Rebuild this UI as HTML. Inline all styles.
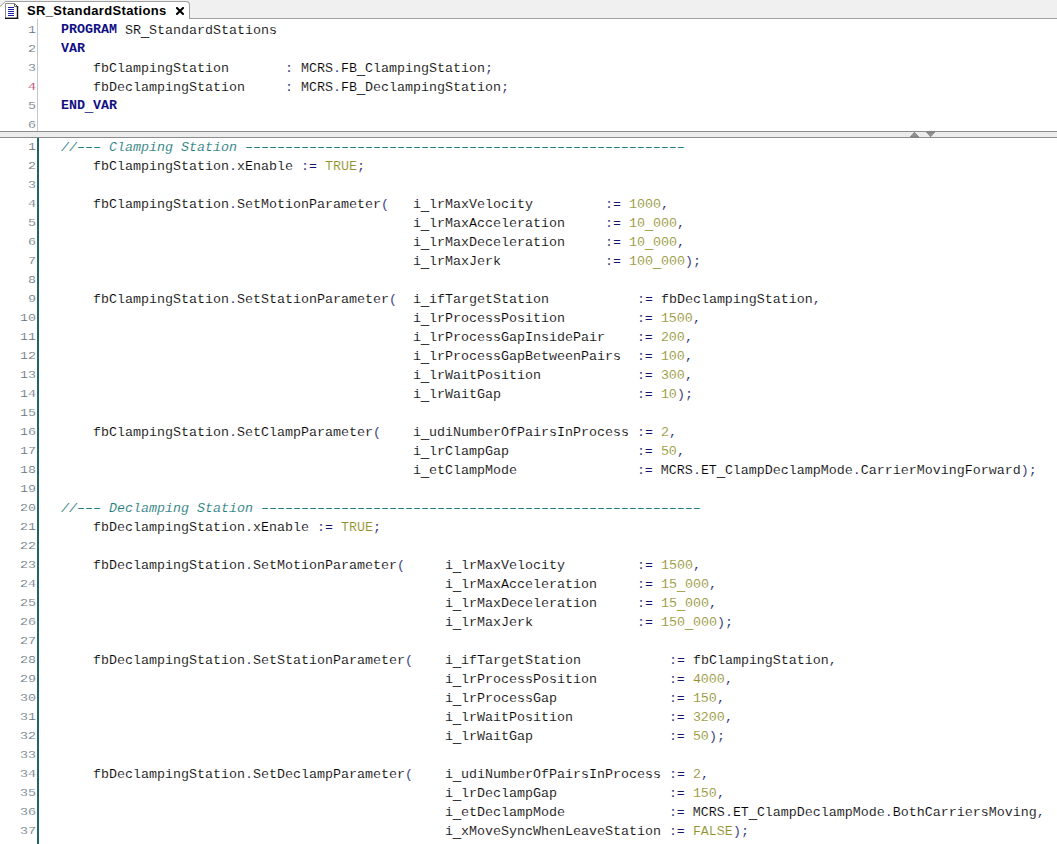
<!DOCTYPE html>
<html><head><meta charset="utf-8"><title>SR_StandardStations</title>
<style>
html,body{margin:0;padding:0;}
body{width:1057px;height:844px;overflow:hidden;background:#fff;position:relative;font-family:"Liberation Sans",sans-serif;}
#tabs{position:absolute;left:0;top:0;width:1057px;height:18px;background:#f0f0f0;border-bottom:1px solid #a0a0a0;}
#tab{position:absolute;left:0;top:1px;width:189px;height:18px;background:#fff;border-top:1px solid #a0a0a0;border-right:1px solid #a0a0a0;border-top-right-radius:4px;box-sizing:content-box;}
#ico{position:absolute;left:5px;top:1px;}
#slant{position:absolute;left:0;top:0;}
#ttl{position:absolute;left:27px;top:1px;font-weight:bold;font-size:13px;line-height:16px;color:#000;white-space:pre;letter-spacing:0.35px;}
#cls{position:absolute;left:176px;top:5px;}
.pane{position:absolute;left:0;width:1057px;background:#fff;overflow:hidden;}
#top{top:19px;height:112px;}
#top .ln{top:2px;}
#top .cd b{position:relative;top:-1px;}
#bot{top:138px;height:706px;}
#split{position:absolute;left:0;top:131px;width:1057px;height:5px;background:#ececec;border-top:1px solid #8c8c8c;border-bottom:1px solid #8c8c8c;}
#arr{position:absolute;left:909px;top:-1px;}
.gut{position:absolute;top:0;bottom:0;}
#top .gut{left:37px;width:1px;background:#c4c4cc;}
#bot .gut{left:37px;width:2px;background:#206464;}
.ln{position:relative;height:19px;white-space:pre;}
.no{position:absolute;left:0;top:-1px;width:36px;text-align:right;font-family:"Liberation Mono",monospace;font-size:13.333px;line-height:19px;color:#63737e;-webkit-text-stroke:0.2px #fff;transform:scaleY(.88);transform-origin:0 13px;}
.no em{font-style:normal;}
.no em.r{color:#b03050;}
.cd{position:absolute;left:61px;top:0;transform:scaleY(.9);transform-origin:0 13px;font-family:"Liberation Mono",monospace;font-size:13.333px;line-height:19px;color:#000;-webkit-text-stroke:0.14px #fff;}
.cd b{color:#101084;font-weight:bold;-webkit-text-stroke:0;}
.cd i{color:#1f7c7c;font-style:italic;-webkit-text-stroke:0.1px #fff;}
.cd a{position:relative;top:2px;-webkit-text-stroke:0.35px currentColor;}
.cd u{color:#90902c;text-decoration:none;}
.cd s{color:#14146a;text-decoration:none;}

</style></head>
<body>
<div id="tabs">
<div id="tab">
<svg id="ico" width="14" height="17" viewBox="0 0 14 17"><path d="M0.5 0.5H9L12.5 4V15.5H0.5Z" fill="#fff"/><path d="M0.5 16V0.5H9.5" fill="none" stroke="#8a8a8a" stroke-width="1"/><path d="M9.5 0.5L12.5 3.5" fill="none" stroke="#555" stroke-width="1"/><path d="M9.5 1V3.5H12" fill="none" stroke="#666" stroke-width="1"/><path d="M12.5 3V16" fill="none" stroke="#111" stroke-width="1.4"/><path d="M0 15.3H13.2" fill="none" stroke="#111" stroke-width="1.4"/><path d="M3 4.5H9M3 6.5H9M3 8.5H9M3 10.5H9M3 12.5H9" stroke="#1c1c9c" stroke-width="1"/></svg>
<span id="ttl">SR_StandardStations</span>
<svg id="cls" width="8" height="8" viewBox="0 0 8 8"><path d="M1 1L7 7M7 1L1 7" stroke="#000" stroke-width="2" stroke-linecap="square" fill="none"/></svg>
</div>
<svg id="slant" width="7" height="8" viewBox="0 0 7 8"><path d="M0 0H7V1.5H5.5L0 6.5Z" fill="#f0f0f0"/><path d="M0 6.5L5.5 1.5H7" fill="none" stroke="#9a9a9a" stroke-width="1"/></svg>
</div>
<div id="top" class="pane">
<div class="gut"></div>
<div class="ln"><span class="no"><em>1</em></span><span class="cd"><b>PROGRAM</b> SR<a>_</a>StandardStations</span></div>
<div class="ln"><span class="no"><em>2</em></span><span class="cd"><b>VAR</b></span></div>
<div class="ln"><span class="no"><em>3</em></span><span class="cd">    fbClampingStation       <s>:</s> MCRS<s>.</s>FB<a>_</a>ClampingStation<s>;</s></span></div>
<div class="ln"><span class="no"><em class="r">4</em></span><span class="cd">    fbDeclampingStation     <s>:</s> MCRS<s>.</s>FB<a>_</a>DeclampingStation<s>;</s></span></div>
<div class="ln"><span class="no"><em>5</em></span><span class="cd"><b>END<a>_</a>VAR</b></span></div>
<div class="ln"><span class="no"><em>6</em></span><span class="cd"></span></div>
</div>
<div id="split"><svg width="30" height="7" viewBox="0 0 30 7" id="arr"><path d="M1.2 6L5.4 1.2L9.8 6Z" fill="#909090" stroke="#707070" stroke-width="0.6"/><path d="M17.4 1L21.6 5.8L25.8 1Z" fill="#909090" stroke="#707070" stroke-width="0.6"/></svg></div>
<div id="bot" class="pane">
<div class="gut"></div>
<div class="ln"><span class="no"><em>1</em></span><span class="cd"><i>//––– Clamping Station –––––––––––––––––––––––––––––––––––––––––––––––––––––––</i></span></div>
<div class="ln"><span class="no"><em>2</em></span><span class="cd">    fbClampingStation<s>.</s>xEnable <s>:=</s> <u>TRUE</u><s>;</s></span></div>
<div class="ln"><span class="no"><em>3</em></span><span class="cd"></span></div>
<div class="ln"><span class="no"><em>4</em></span><span class="cd">    fbClampingStation<s>.</s>SetMotionParameter<s>(</s>   i<a>_</a>lrMaxVelocity         <s>:=</s> <u>1000</u><s>,</s></span></div>
<div class="ln"><span class="no"><em>5</em></span><span class="cd">                                            i<a>_</a>lrMaxAcceleration     <s>:=</s> <u>10<a>_</a>000</u><s>,</s></span></div>
<div class="ln"><span class="no"><em>6</em></span><span class="cd">                                            i<a>_</a>lrMaxDeceleration     <s>:=</s> <u>10<a>_</a>000</u><s>,</s></span></div>
<div class="ln"><span class="no"><em>7</em></span><span class="cd">                                            i<a>_</a>lrMaxJerk             <s>:=</s> <u>100<a>_</a>000</u><s>)</s><s>;</s></span></div>
<div class="ln"><span class="no"><em>8</em></span><span class="cd"></span></div>
<div class="ln"><span class="no"><em>9</em></span><span class="cd">    fbClampingStation<s>.</s>SetStationParameter<s>(</s>  i<a>_</a>ifTargetStation           <s>:=</s> fbDeclampingStation<s>,</s></span></div>
<div class="ln"><span class="no"><em>10</em></span><span class="cd">                                            i<a>_</a>lrProcessPosition         <s>:=</s> <u>1500</u><s>,</s></span></div>
<div class="ln"><span class="no"><em>11</em></span><span class="cd">                                            i<a>_</a>lrProcessGapInsidePair    <s>:=</s> <u>200</u><s>,</s></span></div>
<div class="ln"><span class="no"><em>12</em></span><span class="cd">                                            i<a>_</a>lrProcessGapBetweenPairs  <s>:=</s> <u>100</u><s>,</s></span></div>
<div class="ln"><span class="no"><em>13</em></span><span class="cd">                                            i<a>_</a>lrWaitPosition            <s>:=</s> <u>300</u><s>,</s></span></div>
<div class="ln"><span class="no"><em>14</em></span><span class="cd">                                            i<a>_</a>lrWaitGap                 <s>:=</s> <u>10</u><s>)</s><s>;</s></span></div>
<div class="ln"><span class="no"><em>15</em></span><span class="cd"></span></div>
<div class="ln"><span class="no"><em>16</em></span><span class="cd">    fbClampingStation<s>.</s>SetClampParameter<s>(</s>    i<a>_</a>udiNumberOfPairsInProcess <s>:=</s> <u>2</u><s>,</s></span></div>
<div class="ln"><span class="no"><em>17</em></span><span class="cd">                                            i<a>_</a>lrClampGap                <s>:=</s> <u>50</u><s>,</s></span></div>
<div class="ln"><span class="no"><em>18</em></span><span class="cd">                                            i<a>_</a>etClampMode               <s>:=</s> MCRS<s>.</s>ET<a>_</a>ClampDeclampMode<s>.</s>CarrierMovingForward<s>)</s><s>;</s></span></div>
<div class="ln"><span class="no"><em>19</em></span><span class="cd"></span></div>
<div class="ln"><span class="no"><em>20</em></span><span class="cd"><i>//––– Declamping Station –––––––––––––––––––––––––––––––––––––––––––––––––––––––</i></span></div>
<div class="ln"><span class="no"><em>21</em></span><span class="cd">    fbDeclampingStation<s>.</s>xEnable <s>:=</s> <u>TRUE</u><s>;</s></span></div>
<div class="ln"><span class="no"><em>22</em></span><span class="cd"></span></div>
<div class="ln"><span class="no"><em>23</em></span><span class="cd">    fbDeclampingStation<s>.</s>SetMotionParameter<s>(</s>     i<a>_</a>lrMaxVelocity         <s>:=</s> <u>1500</u><s>,</s></span></div>
<div class="ln"><span class="no"><em>24</em></span><span class="cd">                                                i<a>_</a>lrMaxAcceleration     <s>:=</s> <u>15<a>_</a>000</u><s>,</s></span></div>
<div class="ln"><span class="no"><em>25</em></span><span class="cd">                                                i<a>_</a>lrMaxDeceleration     <s>:=</s> <u>15<a>_</a>000</u><s>,</s></span></div>
<div class="ln"><span class="no"><em>26</em></span><span class="cd">                                                i<a>_</a>lrMaxJerk             <s>:=</s> <u>150<a>_</a>000</u><s>)</s><s>;</s></span></div>
<div class="ln"><span class="no"><em>27</em></span><span class="cd"></span></div>
<div class="ln"><span class="no"><em>28</em></span><span class="cd">    fbDeclampingStation<s>.</s>SetStationParameter<s>(</s>    i<a>_</a>ifTargetStation           <s>:=</s> fbClampingStation<s>,</s></span></div>
<div class="ln"><span class="no"><em>29</em></span><span class="cd">                                                i<a>_</a>lrProcessPosition         <s>:=</s> <u>4000</u><s>,</s></span></div>
<div class="ln"><span class="no"><em>30</em></span><span class="cd">                                                i<a>_</a>lrProcessGap              <s>:=</s> <u>150</u><s>,</s></span></div>
<div class="ln"><span class="no"><em>31</em></span><span class="cd">                                                i<a>_</a>lrWaitPosition            <s>:=</s> <u>3200</u><s>,</s></span></div>
<div class="ln"><span class="no"><em>32</em></span><span class="cd">                                                i<a>_</a>lrWaitGap                 <s>:=</s> <u>50</u><s>)</s><s>;</s></span></div>
<div class="ln"><span class="no"><em>33</em></span><span class="cd"></span></div>
<div class="ln"><span class="no"><em>34</em></span><span class="cd">    fbDeclampingStation<s>.</s>SetDeclampParameter<s>(</s>    i<a>_</a>udiNumberOfPairsInProcess <s>:=</s> <u>2</u><s>,</s></span></div>
<div class="ln"><span class="no"><em>35</em></span><span class="cd">                                                i<a>_</a>lrDeclampGap              <s>:=</s> <u>150</u><s>,</s></span></div>
<div class="ln"><span class="no"><em>36</em></span><span class="cd">                                                i<a>_</a>etDeclampMode             <s>:=</s> MCRS<s>.</s>ET<a>_</a>ClampDeclampMode<s>.</s>BothCarriersMoving<s>,</s></span></div>
<div class="ln"><span class="no"><em>37</em></span><span class="cd">                                                i<a>_</a>xMoveSyncWhenLeaveStation <s>:=</s> <u>FALSE</u><s>)</s><s>;</s></span></div>
</div>
</body></html>
